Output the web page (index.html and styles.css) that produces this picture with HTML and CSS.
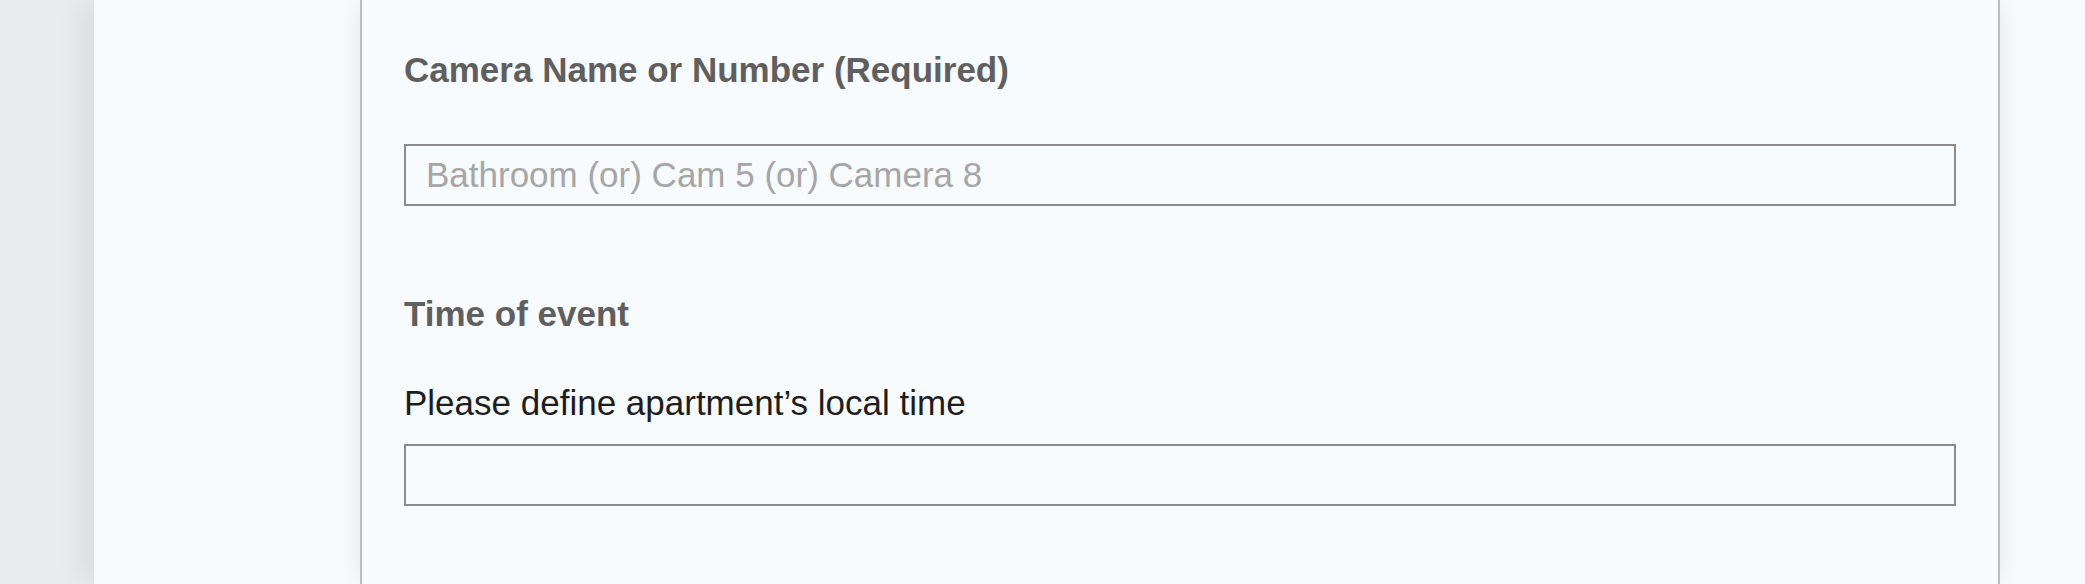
FILE: index.html
```html
<!DOCTYPE html>
<html lang="en">
<head>
    <meta charset="UTF-8">
    <meta name="viewport" content="width=device-width, initial-scale=1.0">
    <title>Report an Event</title>
    <link rel="stylesheet" href="styles.css">
</head>
<body>

    <div class="page">
        <form class="card" id="eventForm">
            <div class="field camera-field">
                <label class="field-title" for="camera">Camera Name or Number (Required)</label>
                <input type="text" id="camera" name="camera" placeholder="Bathroom (or) Cam 5 (or) Camera 8" required>
            </div>

            <div class="field time-field">
                <h3 class="field-title">Time of event</h3>
                <label class="field-hint" for="event_time">Please define apartment’s local time</label>
                <input type="text" id="event_time" name="event_time">
            </div>
        </form>
    </div>

</body>
</html>
```

FILE: styles.css
```css
/* Global Styles */
* {
    box-sizing: border-box;
    margin: 0;
    padding: 0;
}
html, body {
    height: 100%;
}
body {
    font-family: "Liberation Sans", Arial, sans-serif;
    background: #e9ebee;
    padding-left: 94px;
    overflow: hidden;
}

/* Page panel */
.page {
    min-height: 100vh;
    background-color: #f7fbfe;
    box-shadow: -6px 0 30px rgba(0, 0, 0, 0.09);
    padding-left: 266px;
    padding-right: 85px;
}

/* Form card */
.card {
    min-height: 100vh;
    background-color: #f7fbfe;
    border-left: 2px solid #bcbcbc;
    border-right: 2px solid #bcbcbc;
    box-shadow: 0 0 24px rgba(0, 0, 0, 0.08);
    padding: 50px 42px 0;
}
.field + .field {
    margin-top: 88px;
}
.field-title {
    display: block;
    font-size: 35px;
    line-height: 40px;
    font-weight: bold;
    color: #5f5f5f;
    margin-bottom: 49px;
}
.camera-field .field-title {
    margin-bottom: 54px; /* a bit more room above the input */
}
.field-hint {
    display: block;
    font-size: 35px;
    line-height: 40px;
    color: #1d1d1f;
    margin-bottom: 21px;
}
input {
    display: block;
    width: 100%;
    height: 62px;
    padding: 0 20px;
    font-family: inherit;
    font-size: 35px;
    color: #1d1d1f;
    background: transparent;
    border: 2px solid #8c8c8c;
    border-radius: 0;
    outline: none;
}
input::placeholder {
    color: #a6a6a6;
}
```
